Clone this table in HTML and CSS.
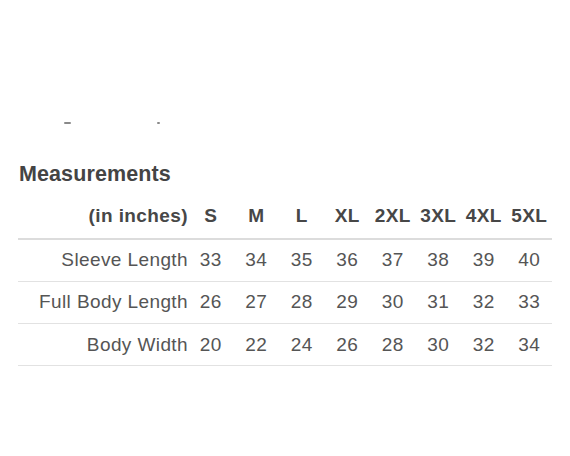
FILE: index.html
```html
<!DOCTYPE html>
<html lang="en">
<head>
<meta charset="utf-8">
<title>Measurements</title>
<link rel="stylesheet" href="styles.css">
</head>
<body>
<div class="page">
  <div class="cutoff" aria-hidden="true">
    <span class="tail tail-g"></span>
    <span class="tail tail-y"></span>
  </div>
  <h2 class="title">Measurements</h2>
  <table class="sizes">
    <colgroup>
      <col class="col-label">
      <col><col><col><col><col><col><col><col>
    </colgroup>
    <thead>
      <tr>
        <th class="label">(in inches)</th>
        <th>S</th><th>M</th><th>L</th><th>XL</th><th>2XL</th><th>3XL</th><th>4XL</th><th>5XL</th>
      </tr>
    </thead>
    <tbody>
      <tr>
        <td class="label">Sleeve Length</td>
        <td>33</td><td>34</td><td>35</td><td>36</td><td>37</td><td>38</td><td>39</td><td>40</td>
      </tr>
      <tr>
        <td class="label">Full Body Length</td>
        <td>26</td><td>27</td><td>28</td><td>29</td><td>30</td><td>31</td><td>32</td><td>33</td>
      </tr>
      <tr>
        <td class="label">Body Width</td>
        <td>20</td><td>22</td><td>24</td><td>26</td><td>28</td><td>30</td><td>32</td><td>34</td>
      </tr>
    </tbody>
  </table>
</div>
</body>
</html>
```

FILE: styles.css
```css
html, body {
  margin: 0;
  padding: 0;
  background: #ffffff;
}

body {
  font-family: "Liberation Sans", Arial, Helvetica, sans-serif;
  color: #555555;
}

.page {
  width: 534px;
  padding: 0 0 0 18px;
}

.cutoff {
  position: relative;
  height: 126px;
}

.tail {
  position: absolute;
  top: 122px;
  height: 2px;
  background: #8a8a8a;
  border-radius: 1px;
}

.tail-g {
  left: 46px;
  width: 7px;
}

.tail-y {
  left: 139px;
  width: 3px;
}

.title {
  margin: 36px 0 0 1px;
  font-size: 21.5px;
  line-height: 24px;
  font-weight: bold;
  letter-spacing: 0.1px;
  color: #444444;
}

.sizes {
  width: 534px;
  margin-top: 7px;
  border-collapse: collapse;
  table-layout: fixed;
  font-size: 19px;
  line-height: 19px;
  letter-spacing: 0.4px;
}

.col-label {
  width: 170px;
}

.sizes th,
.sizes td {
  padding: 0;
  text-align: center;
  white-space: nowrap;
}

.sizes .label {
  text-align: right;
}

.sizes th {
  font-weight: bold;
  color: #474747;
  padding: 12.5px 0 13px;
  border-bottom: 2px solid #dcdcdc;
}

.sizes td {
  padding: 10.5px 0 11.8px;
  border-bottom: 1px solid #e2e2e2;
}
```
